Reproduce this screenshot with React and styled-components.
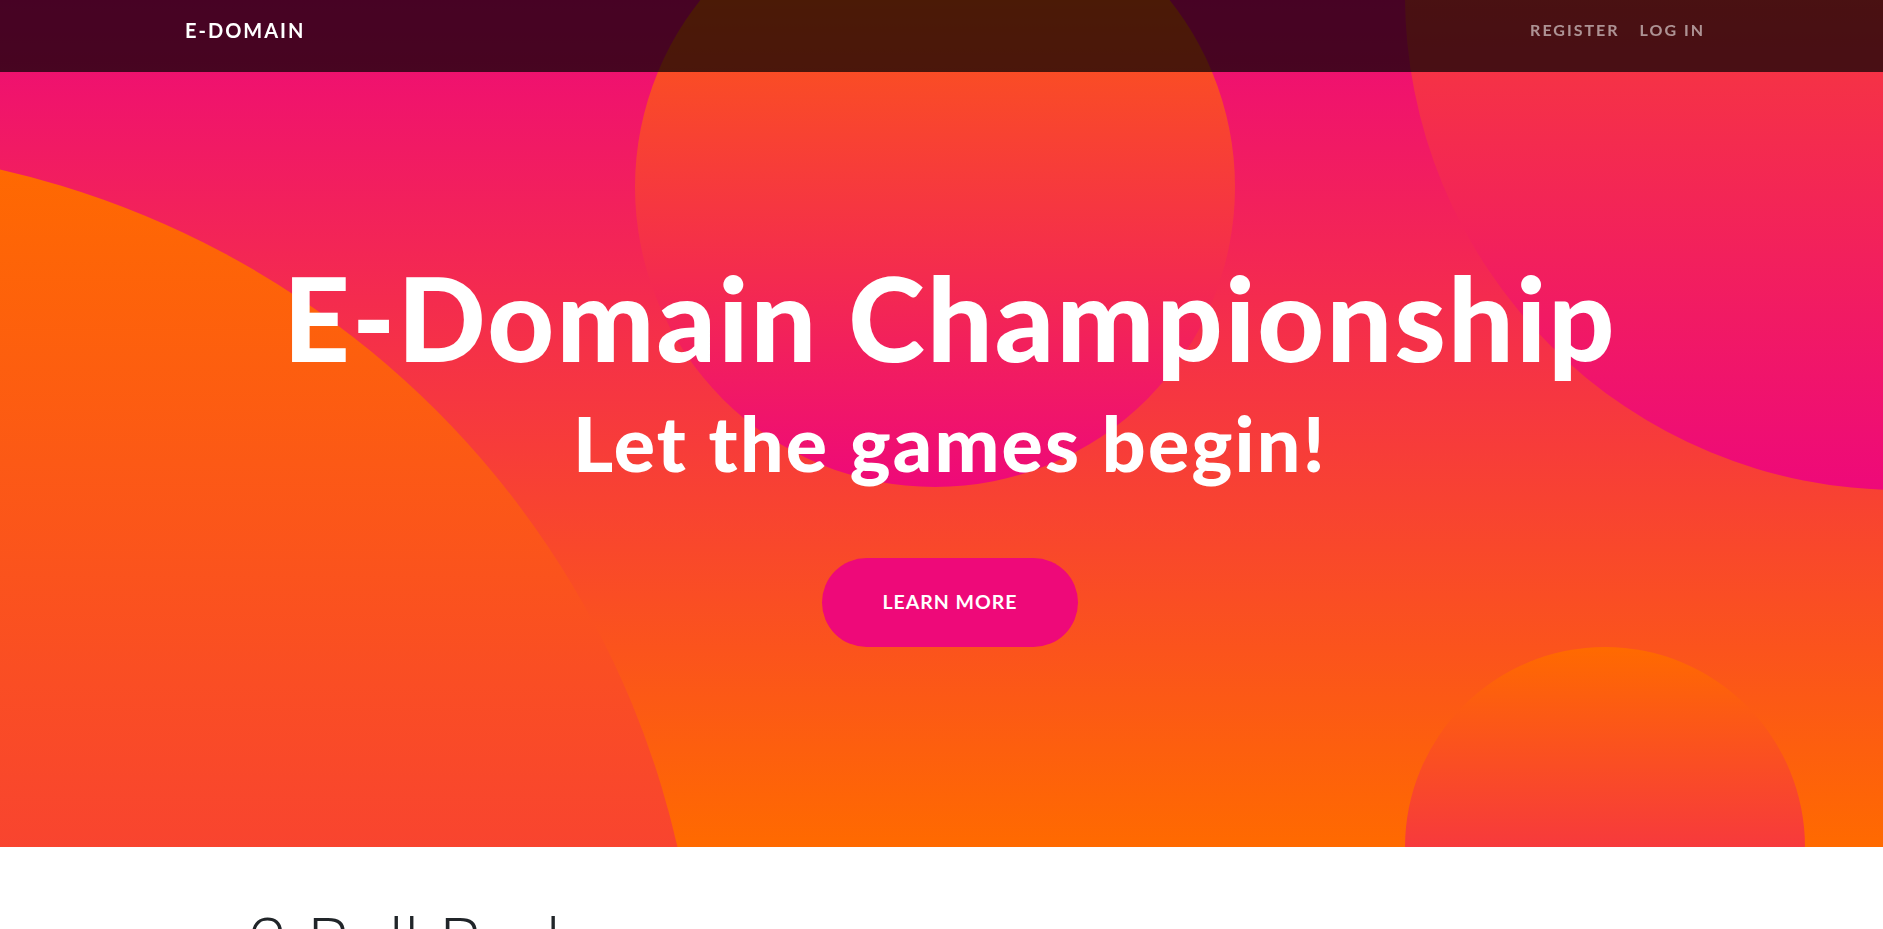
// Libraries
import React from "react";
import styled, { createGlobalStyle } from "styled-components";

const GlobalStyle = createGlobalStyle`
  html {
    scrollbar-width: none;
  }
  html::-webkit-scrollbar {
    display: none;
  }
  body {
    margin: 0;
    overflow-x: hidden;
    font-family: Lato, "Liberation Sans", sans-serif;
    color: #212529;
    background: #fff;
  }
`;

const Page = styled.div`
  width: 1900px;
`;

const Container = styled.div`
  max-width: 1560px;
  margin: 0 auto;
  padding: 0 15px;
  box-sizing: border-box;
`;

// Navbar
const Navbar = styled.nav`
  position: fixed;
  top: 0;
  left: 0;
  z-index: 10;
  width: 1900px;
  height: 72px;
  padding-top: 15px;
  box-sizing: border-box;
  background-color: rgba(0, 0, 0, 0.7);
`;

const NavRow = styled(Container)`
  display: flex;
  justify-content: space-between;
  align-items: center;
`;

const Brand = styled.a`
  color: #fff;
  text-decoration: none;
  text-transform: uppercase;
  font-size: 20px;
  line-height: 30px;
  font-weight: 700;
  letter-spacing: 2px;
`;

const NavMenu = styled.ul`
  display: flex;
  list-style: none;
  margin: 0;
  padding: 0;
`;

const NavLink = styled.a`
  display: block;
  padding: 0 10px;
  color: rgba(255, 255, 255, 0.55);
  text-decoration: none;
  text-transform: uppercase;
  font-size: 16px;
  line-height: 30px;
  font-weight: 700;
  letter-spacing: 2px;
`;

// Masthead
const Masthead = styled.header`
  position: relative;
  overflow: hidden;
  padding: 248px 0 200px;
  text-align: center;
  background: linear-gradient(0deg, #ff6a00 0%, #ee0979 100%);
`;

const Circle = styled.div`
  position: absolute;
  z-index: 0;
  border-radius: 100%;
  background: linear-gradient(0deg, #ee0979 0%, #ff6a00 100%);
  width: ${(p) => p.size}px;
  height: ${(p) => p.size}px;
  ${(p) => p.place}
`;

const MastheadContent = styled(Container)`
  position: relative;
  z-index: 1;
  color: #fff;
`;

const Heading = styled.h1`
  margin: 0;
  font-size: 116px;
  line-height: 139px;
  font-weight: 900;
  letter-spacing: 2.2px;
`;

const Subheading = styled.h2`
  margin: 9px 0 0;
  font-size: 77px;
  line-height: 92px;
  font-weight: 900;
  letter-spacing: 2.2px;
`;

const PillButton = styled.a`
  display: inline-block;
  margin-top: 70px;
  padding: 29px 60px 30px;
  border-radius: 50rem;
  background-color: #ee0979;
  color: #fff;
  text-decoration: none;
  text-transform: uppercase;
  font-size: 19.5px;
  line-height: 30px;
  font-weight: 700;
  letter-spacing: 1px;
`;

// Content section
const Section = styled.section`
  padding-top: 52px;
`;

const SectionTitle = styled.h2`
  margin: 0;
  padding-left: 62px;
  font-size: 70px;
  line-height: 84px;
  font-weight: 300;
  color: #212529;
`;

export default function App() {
  return (
    <Page>
      <GlobalStyle />

      {/* Navigation */}
      <Navbar>
        <NavRow>
          <Brand href="#">E-Domain</Brand>
          <NavMenu>
            <li>
              <NavLink href="#">Register</NavLink>
            </li>
            <li>
              <NavLink href="#">Log In</NavLink>
            </li>
          </NavMenu>
        </NavRow>
      </Navbar>

      {/* Hero */}
      <Masthead>
        <MastheadContent>
          <Heading>E-Domain Championship</Heading>
          <Subheading>Let the games begin!</Subheading>
          <PillButton href="#">Learn More</PillButton>
        </MastheadContent>
        <Circle size={1800} place="bottom: -1100px; left: -1100px;" />
        <Circle size={990} place="top: -500px; right: -495px;" />
        <Circle size={400} place="bottom: -200px; right: 5%;" />
        <Circle size={600} place="top: -113px; right: 35%;" />
      </Masthead>

      {/* First section */}
      <Section>
        <Container>
          <SectionTitle>2 Bull Bash</SectionTitle>
        </Container>
      </Section>
    </Page>
  );
}
